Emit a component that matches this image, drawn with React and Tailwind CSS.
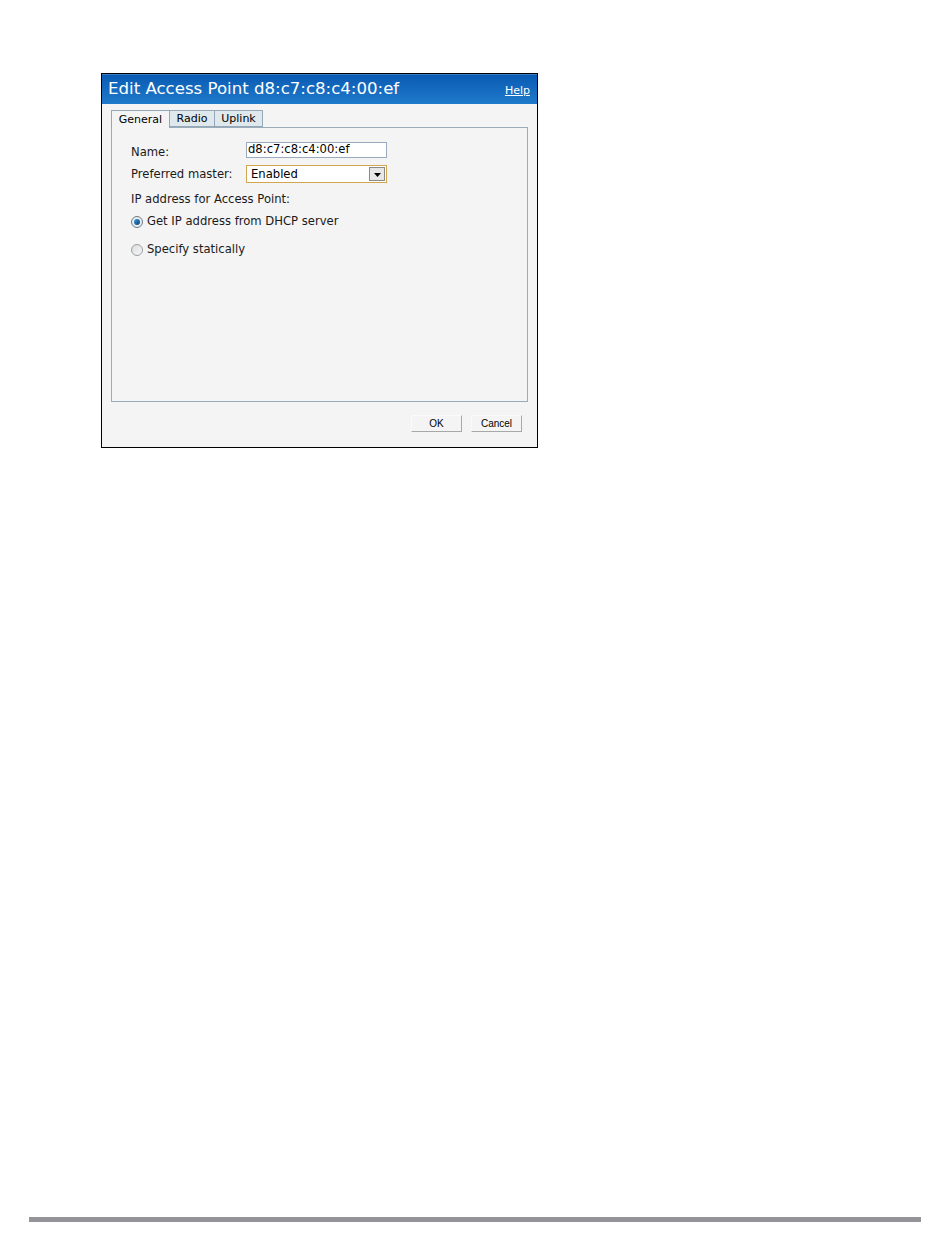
export default function App() {
  return (
    <div className="relative w-[950px] h-[1248px] bg-white" style={{ fontFamily: '"DejaVu Sans", Verdana, sans-serif' }}>
      <div className="pt-[73px] pl-[101px]">
        <div className="w-[437px] h-[375px] border border-black bg-[#f4f4f4] flex flex-col">
          <div className="h-[30px] flex items-center justify-between pl-[6px] pr-[7px] bg-gradient-to-b from-[#0a5bb3] to-[#1f7acb] border-t border-[#3a7cc2]">
            <span className="text-white text-[16.6px] leading-none">Edit Access Point d8:c7:c8:c4:00:ef</span>
            <span className="text-white text-[11px] underline leading-none mt-[2px]">Help</span>
          </div>
          <div className="flex flex-col px-[9px] pt-[5px]">
            <div className="flex items-end h-[18px] text-[11px] leading-none text-black">
              <div className="h-[18px] w-[59px] flex items-center justify-center bg-[#f4f4f4] border border-b-0 border-[#95a8b8] relative z-10 -mb-px pb-px">General</div>
              <div className="h-[17px] w-[45px] flex items-center justify-center bg-[#dfe8ec] border border-l-0 border-[#95a8b8]">Radio</div>
              <div className="h-[17px] w-[48px] flex items-center justify-center bg-[#dfe8ec] border border-l-0 border-[#95a8b8]">Uplink</div>
            </div>
            <div className="h-[275px] border border-[#9aabba] bg-[#f4f4f4] pl-[19px] pt-[14px] text-[11.6px] text-[#1a1a1a]">
              <div className="flex items-center h-[16px]">
                <span className="w-[115px] mt-[6px]">Name:</span>
                <div className="w-[141px] h-[16px] bg-white border border-[#9aabbf] flex items-center pl-[1px] text-black">d8:c7:c8:c4:00:ef</div>
              </div>
              <div className="flex items-center h-[18px] mt-[7px]">
                <span className="w-[115px] mt-[1px]">Preferred master:</span>
                <div className="w-[141px] h-[18px] bg-white border border-[#d2a54f] flex items-center justify-between pl-[4px] pr-[1px] text-black">
                  <span className="mt-[2px]">Enabled</span>
                  <div className="w-[16px] h-[14px] bg-[#e7e7e7] border border-[#8a8a8a] flex items-end justify-center pb-[3px]">
                    <svg width="7" height="4" viewBox="0 0 7 4"><path d="M0 0h7L3.5 4z" fill="#000" /></svg>
                  </div>
                </div>
              </div>
              <div className="mt-[9px] leading-[14px]">IP address for Access Point:</div>
              <div className="flex items-center mt-[9px] h-[14px]">
                <span className="w-[12px] h-[12px] rounded-full border border-[#6f7a84] bg-[#e8eef2] flex items-center justify-center">
                  <span className="w-[6px] h-[6px] rounded-full bg-gradient-to-br from-[#3a9be0] to-[#0c3f75]" />
                </span>
                <span className="ml-[4px]">Get IP address from DHCP server</span>
              </div>
              <div className="flex items-center mt-[14px] h-[14px]">
                <span className="w-[12px] h-[12px] rounded-full border border-[#9aa0a6] bg-gradient-to-br from-[#dcdcdc] to-[#f8f8f8]" />
                <span className="ml-[4px]">Specify statically</span>
              </div>
            </div>
          </div>
          <div className="flex justify-end gap-[9px] pr-[15px] pt-[13px] text-[10px] text-black" style={{ fontFamily: '"Liberation Sans", Arial, sans-serif' }}>
            <div className="w-[51px] h-[17px] flex items-center justify-center bg-[#f4f4f4] border border-t-[#fafafa] border-l-[#fafafa] border-r-[#a8a8a8] border-b-[#a8a8a8]">OK</div>
            <div className="w-[51px] h-[17px] flex items-center justify-center bg-[#f4f4f4] border border-t-[#fafafa] border-l-[#fafafa] border-r-[#a8a8a8] border-b-[#a8a8a8]">Cancel</div>
          </div>
        </div>
      </div>
      <div className="absolute left-[29px] top-[1217px] w-[892px] h-[5px] bg-[#939398]" />
    </div>
  );
}
